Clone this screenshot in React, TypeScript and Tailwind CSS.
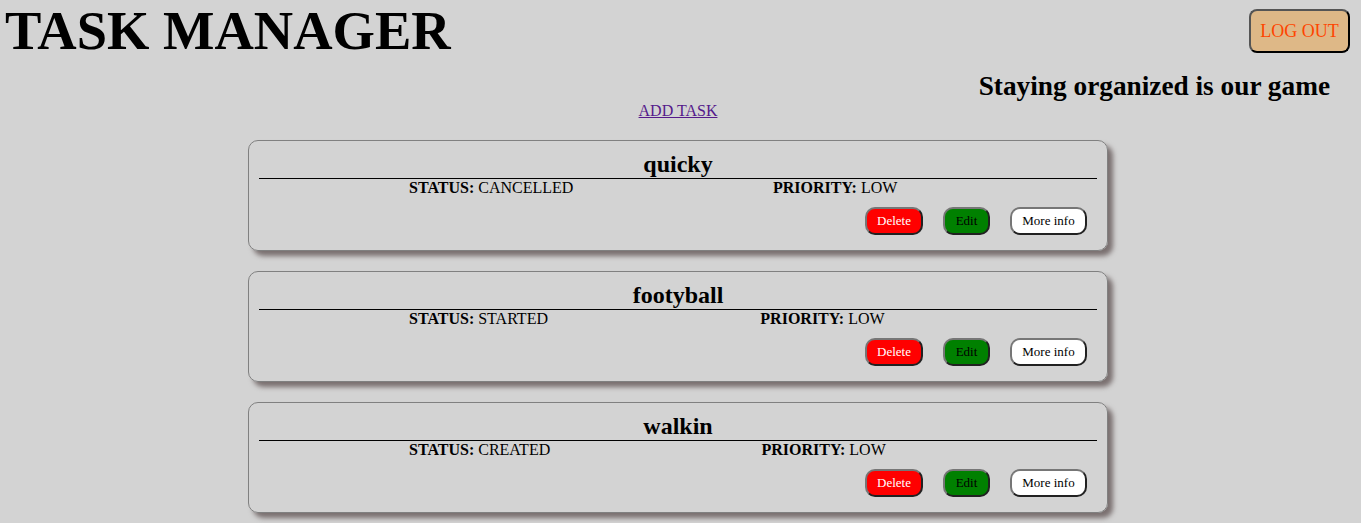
import React from "react";

const tasks = [
  { name: "quicky", status: "CANCELLED", priority: "LOW" },
  { name: "footyball", status: "STARTED", priority: "LOW" },
  { name: "walkin", status: "CREATED", priority: "LOW" },
];

function Card({ t }: { t: { name: string; status: string; priority: string } }) {
  return (
    <div className="w-[860px] border border-[#808080] rounded-[10px] shadow-[5px_5px_5px_#7a7070] px-[10px] pt-[10px] pb-[15px] mb-[20px]">
      <div className="text-[24px] font-bold leading-[27px] text-center">{t.name}</div>
      <div className="border-t border-black" />
      <div className="flex text-[16px] leading-[18px]">
        <span className="ml-[150px]">
          <b>STATUS:</b> {t.status}
        </span>
        <span className="mx-auto">
          <b>PRIORITY:</b> {t.priority}
        </span>
      </div>
      <div className="flex justify-end gap-[20px] pr-[10px] mt-[10px]">
        <button className="h-[28px] w-[58px] rounded-[10px] border-2 [border-style:outset] border-[#767676] bg-[#ff0000] text-white text-[13px]">
          Delete
        </button>
        <button className="h-[28px] w-[47px] rounded-[10px] border-2 [border-style:outset] border-[#767676] bg-[#008000] text-black text-[13px]">
          Edit
        </button>
        <button className="h-[28px] w-[77px] rounded-[10px] border-2 [border-style:outset] border-[#767676] bg-white text-black text-[13px]">
          More info
        </button>
      </div>
    </div>
  );
}

export default function App() {
  return (
    <div
      className="min-h-[523px] bg-[#d3d3d3] text-black"
      style={{ fontFamily: '"Liberation Serif", "Times New Roman", serif' }}
    >
      <div className="flex justify-between items-start">
        <h1 className="text-[54.5px] font-bold leading-[62px] pl-[5px]">TASK MANAGER</h1>
        <button className="mt-[9px] mr-[11px] w-[101px] h-[44px] rounded-[8px] border-2 [border-style:outset] border-[#555] bg-[#deb887] text-[#ff4500] text-[18px]">
          LOG OUT
        </button>
      </div>
      <div className="flex justify-end pr-[31px] mt-[9px]">
        <h2 className="text-[27.3px] font-bold leading-[30px]">Staying organized is our game</h2>
      </div>
      <div className="flex flex-col items-center w-[1356px]">
        <a href="#" className="text-[16px] leading-[18px] text-[#551a8b] underline mt-[1px] mb-[20px]">
          ADD TASK
        </a>
        {tasks.map((t) => (
          <Card key={t.name} t={t} />
        ))}
      </div>
    </div>
  );
}
